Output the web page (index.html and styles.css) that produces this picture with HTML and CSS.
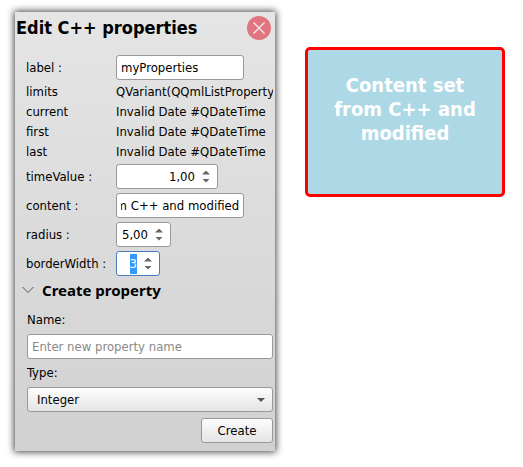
FILE: index.html
```html
<!DOCTYPE html>
<html lang="en">
<head>
<meta charset="utf-8">
<title>Edit C++ properties</title>
<link rel="stylesheet" href="styles.css">
</head>
<body>
<main class="workspace">
  <section class="panel">
    <header class="panel-header">
      <h1 class="panel-title">Edit C++ properties</h1>
      <button class="close" type="button" aria-label="Close">
        <svg viewBox="0 0 24 24" width="24" height="24"><circle cx="12" cy="12" r="12" fill="#e07580"/><path d="M6.5 6.5l11 11M17.5 6.5l-11 11" stroke="#f4e4e6" stroke-width="1.5" fill="none"/></svg>
      </button>
    </header>
    <form class="properties">
      <div class="row">
        <label for="label">label :</label>
        <input class="field text" id="label" type="text" value="myProperties">
      </div>
      <div class="row info"><span>limits</span><output>QVariant(QQmlListProperty</output></div>
      <div class="row info"><span>current</span><output>Invalid Date #QDateTime</output></div>
      <div class="row info"><span>first</span><output>Invalid Date #QDateTime</output></div>
      <div class="row info"><span>last</span><output>Invalid Date #QDateTime</output></div>
      <div class="row">
        <label for="time">timeValue :</label>
        <div class="field spin spin-wide">
          <input id="time" type="text" value="1,00">
          <span class="steps"><button type="button" class="up" aria-label="Increase"></button><button type="button" class="down" aria-label="Decrease"></button></span>
        </div>
      </div>
      <div class="row">
        <label for="content">content :</label>
        <input class="field text" id="content" type="text" value="Content set from C++ and modified">
      </div>
      <div class="row">
        <label for="radius">radius :</label>
        <div class="field spin spin-medium">
          <input id="radius" type="text" value="5,00">
          <span class="steps"><button type="button" class="up" aria-label="Increase"></button><button type="button" class="down" aria-label="Decrease"></button></span>
        </div>
      </div>
      <div class="row">
        <label for="border">borderWidth :</label>
        <div class="field spin spin-small">
          <input id="border" type="text" value="3">
          <span class="steps"><button type="button" class="up" aria-label="Increase"></button><button type="button" class="down" aria-label="Decrease"></button></span>
        </div>
      </div>
    </form>
    <h2 class="section-title">
      <svg viewBox="0 0 12 8" width="12" height="8"><path d="M.5 1L6 6.5 11.5 1" fill="none" stroke="#555"/></svg>
      Create property
    </h2>
    <form class="create">
      <label for="name">Name:</label>
      <input class="field" id="name" type="text" placeholder="Enter new property name">
      <label for="type">Type:</label>
      <div class="picker">
        <select class="field" id="type"><option>Integer</option></select>
        <span class="arrow"></span>
      </div>
      <button class="field submit" type="button">Create</button>
    </form>
  </section>
  <section class="preview">Content set from C++ and modified</section>
</main>
<script src="script.js"></script>
</body>
</html>
```
FILE: styles.css
```css
* { box-sizing: border-box; }

body {
  margin: 0;
  background: #fff;
  color: #000;
  font: 13px/20px "DejaVu Sans Condensed", "Noto Sans", sans-serif;
}

.workspace {
  display: flex;
  align-items: flex-start;
  gap: 30px;
  padding: 12px 18px 16px 15px;
}

.panel {
  flex: 0 0 260px;
  padding-bottom: 8px;
  background: linear-gradient(#e5e5e5, #d1d1d1);
  box-shadow: 0 0 7px 1px #444;
}

.panel-header {
  display: flex;
  align-items: center;
  justify-content: space-between;
  height: 32px;
  padding: 0 4px 0 1px;
}

h1, h2 {
  margin: 0;
  font-weight: bold;
  white-space: nowrap;
}

.panel-title { font-size: 18px; }

.close {
  width: 24px;
  height: 24px;
  padding: 0;
  border: 0;
  background: none;
}

.close svg { display: block; }

.properties {
  display: flex;
  flex-direction: column;
  padding: 9px 2px 0 11px;
}

.row {
  display: grid;
  grid-template-columns: 90px minmax(0, 1fr);
  align-items: center;
  height: 29px;
}

.info { height: 20px; }

.row output {
  overflow: hidden;
  white-space: nowrap;
}

.field {
  height: 25px;
  border: 1px solid #999;
  border-radius: 3px;
  background: #fff;
  color: #000;
  font: inherit;
  outline: 0;
}

.text {
  width: 128px;
  padding: 0 4px;
}

.spin {
  display: flex;
  align-items: center;
  padding-right: 7px;
}

.spin:focus-within { border-color: #4a7cc0; }

.spin-wide { width: 102px; }
.spin-medium { width: 55px; }
.spin-small { width: 44px; }

.spin input {
  flex: 1;
  min-width: 0;
  height: 20px;
  padding: 0;
  border: 0;
  outline: 0;
  background: none;
  font: inherit;
  text-align: right;
}

input::selection {
  background: #39f;
  color: #fff;
}

.steps {
  display: grid;
  gap: 4px;
  margin-left: 7px;
}

.steps button {
  width: 8px;
  height: 4px;
  padding: 0;
  border: 0;
  background: #666;
}

.up { clip-path: polygon(50% 0, 100% 100%, 0 100%); }
.down { clip-path: polygon(0 0, 100% 0, 50% 100%); }

.section-title {
  display: flex;
  align-items: center;
  gap: 8px;
  height: 24px;
  padding-left: 7px;
  font-family: "Noto Sans", sans-serif;
  font-size: 15px;
}

.create {
  display: flex;
  flex-direction: column;
  padding: 4px 2px 0 12px;
}

.create label {
  height: 28px;
  line-height: 28px;
}

.create input {
  width: 100%;
  padding: 0 4px;
}

.create input::placeholder { color: #888; }

.picker { position: relative; }

.picker select {
  display: block;
  width: 100%;
  padding: 0 9px;
  appearance: none;
  background: linear-gradient(#fdfdfd, #e4e4e4);
}

.arrow {
  position: absolute;
  top: 11px;
  right: 8px;
  width: 8px;
  height: 4px;
  background: #555;
  clip-path: polygon(0 0, 100% 0, 50% 100%);
  pointer-events: none;
}

.submit {
  align-self: flex-end;
  width: 72px;
  margin-top: 6px;
  padding: 0;
  background: linear-gradient(#fdfdfd, #e4e4e4);
}

.preview {
  flex: 1;
  min-height: 150px;
  margin-top: 35px;
  padding: 23px 22px;
  border: 3px solid #f00;
  border-radius: 5px;
  background: #add8e6;
  color: #fff;
  font-size: 20px;
  font-weight: bold;
  line-height: 24px;
  text-align: center;
}
```
FILE: script.js
```js
// Show the end of long content and put the border width in edit mode.
const content = document.getElementById("content");
content.scrollLeft = content.scrollWidth;

const border = document.getElementById("border");
border.focus();
border.select();
```
